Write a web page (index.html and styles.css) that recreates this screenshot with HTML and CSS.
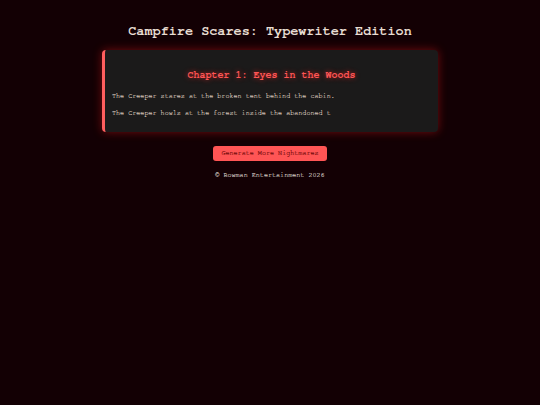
FILE: index.html
```html
<!DOCTYPE html>
<html>
<head>
<meta charset="utf-8">
<link rel="stylesheet" href="styles.css">
</head>
<body>
<div class="page">
  <h1 class="title">Campfire Scares: Typewriter Edition</h1>
  <div class="card">
    <h2 class="chapter">Chapter 1: Eyes in the Woods</h2>
    <p class="line">The Creeper stares at the broken tent behind the cabin.</p>
    <p class="line">The Creeper howls at the forest inside the abandoned t</p>
  </div>
  <div class="actions">
    <button class="btn">Generate More Nightmares</button>
  </div>
  <div class="footer">© Bowman Entertainment 2026</div>
</div>
</body>
</html>
```
FILE: styles.css
```css
html, body {
  margin: 0;
  padding: 0;
  background: #130004;
  height: 100%;
}
body {
  font-family: "FreeMono", "Liberation Mono", "Courier New", monospace;
}
.page {
  width: 336px;
  margin: 0 auto;
  padding-top: 23px;
}
.title {
  margin: 0 0 11px 0;
  font-size: 13.5px;
  line-height: 16px;
  font-weight: bold;
  text-align: center;
  color: #e8ddd2;
}
.card {
  background: #1b1a1a;
  border-left: 3px solid #ff5e5e;
  border-radius: 4px;
  box-shadow: 0 0 10px rgba(255, 30, 30, 0.4);
  padding: 19px 7px 13px 7px;
}
.chapter {
  margin: 0 0 10px 0;
  font-size: 10px;
  line-height: 12px;
  font-weight: bold;
  text-align: center;
  color: #ff5555;
  text-shadow: 0 0 5px rgba(255, 40, 40, 0.7);
}
.line {
  margin: 0 0 6px 0;
  font-size: 6.75px;
  line-height: 11px;
  color: #d4c2b9;
  -webkit-text-stroke: 0.15px #d4c2b9;
}
.line:last-child {
  margin-bottom: 0;
}
.actions {
  display: flex;
  justify-content: center;
  margin-top: 14px;
}
.btn {
  font-family: "FreeMono", "Liberation Mono", "Courier New", monospace;
  font-size: 6.75px;
  line-height: 15px;
  height: 15px;
  padding: 0 8.5px;
  border: none;
  border-radius: 3px;
  background: #ff5555;
  color: #6e0808;
  -webkit-text-stroke: 0.15px #6e0808;
}
.footer {
  margin-top: 10px;
  text-align: center;
  font-size: 6.75px;
  line-height: 9px;
  color: #d8cec6;
  -webkit-text-stroke: 0.15px #d8cec6;
}
```
